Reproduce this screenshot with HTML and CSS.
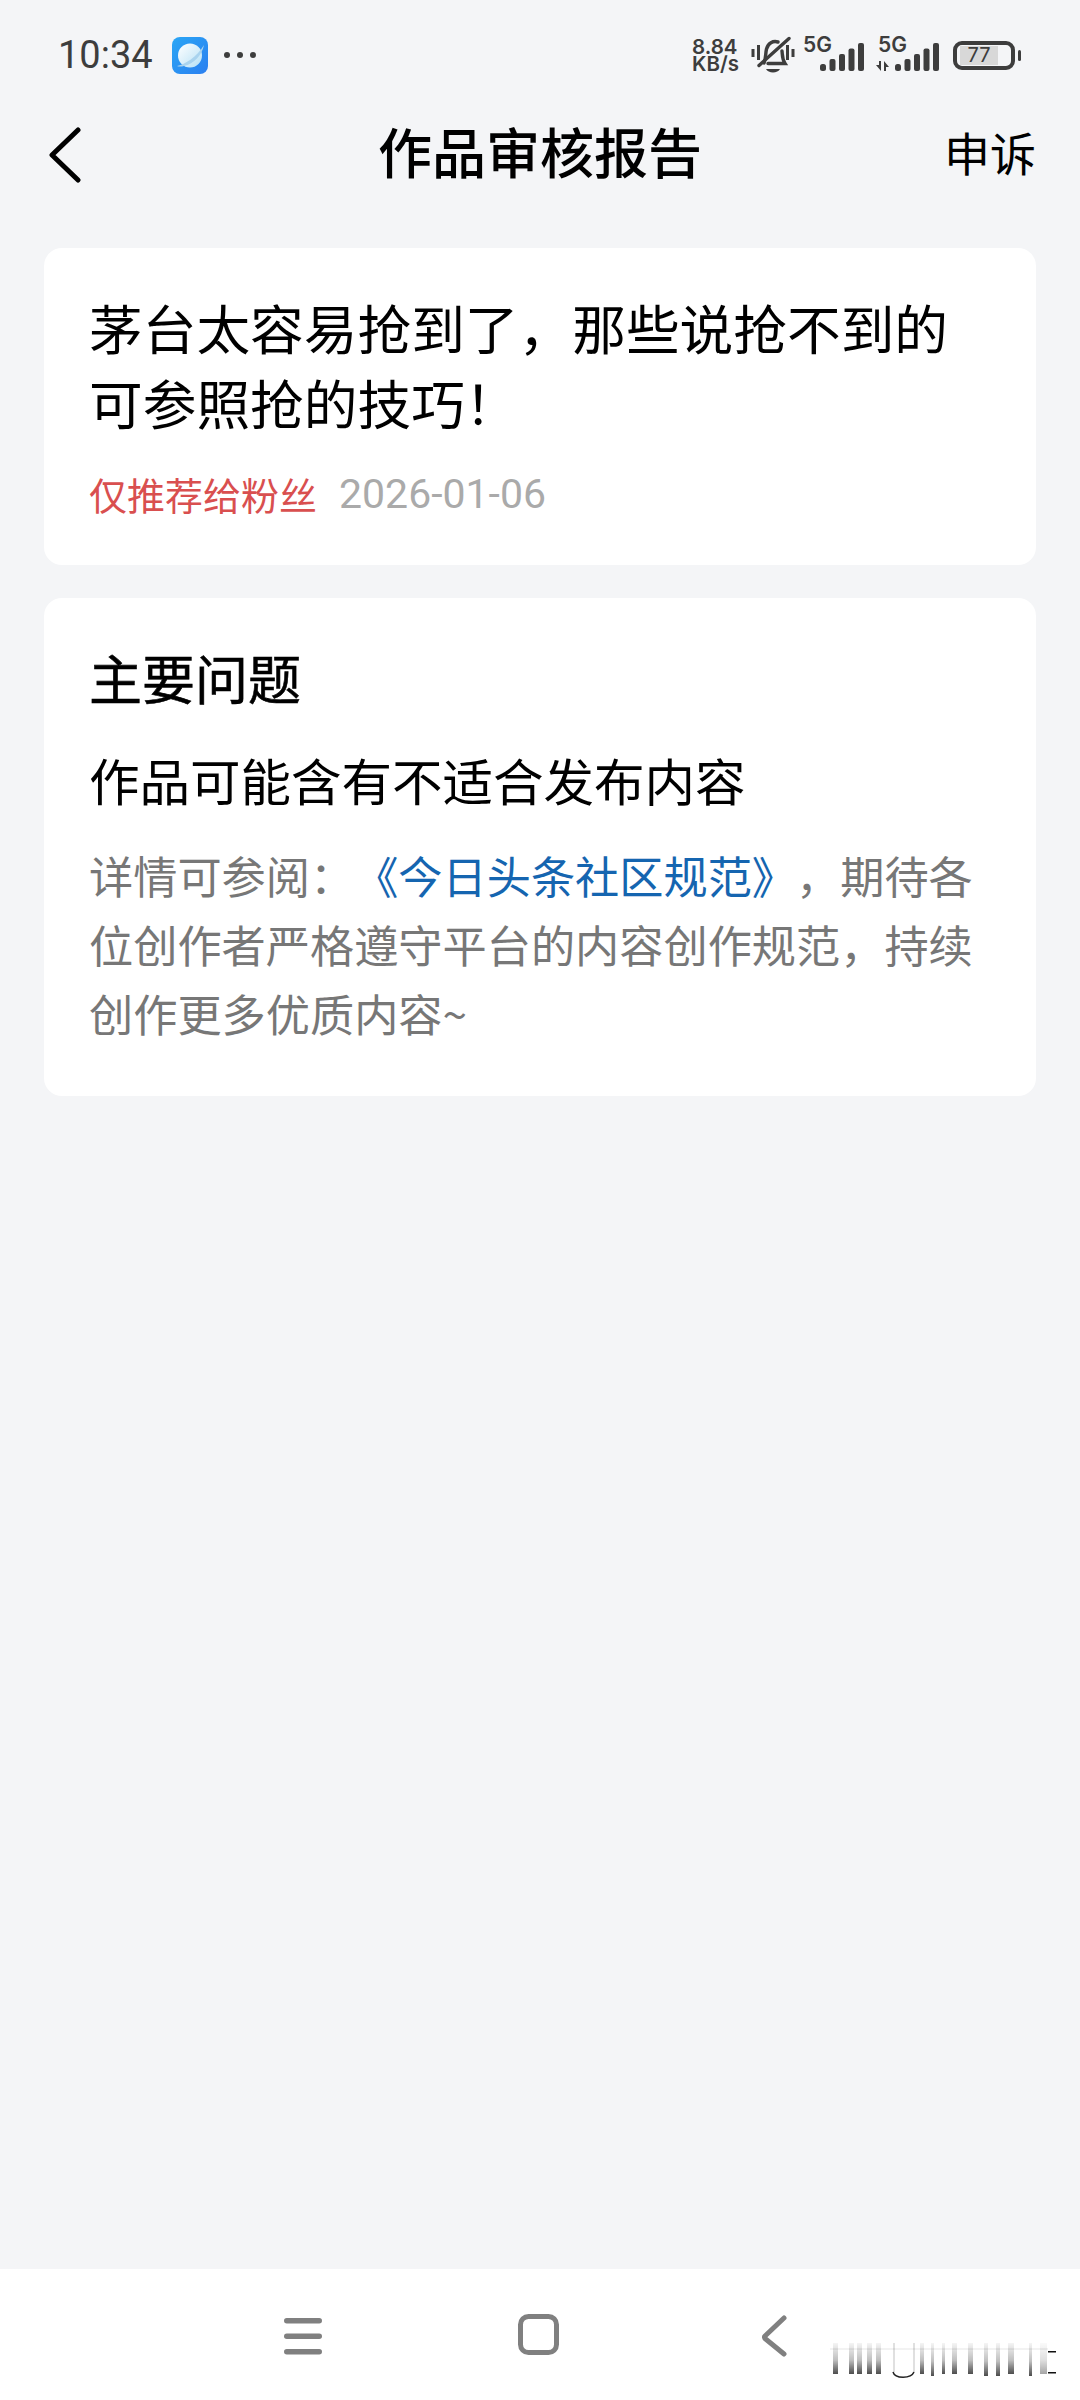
FILE: index.html
```html
<!DOCTYPE html>
<html>
<head>
  <meta charset="utf-8">
  <title>作品审核报告</title>
  <link rel="stylesheet" href="styles.css">
</head>
<body>
  <div class="page">
    <!-- 状态栏 -->
    <div class="status-bar">
      <div class="status-left">
        <span class="time">10:34</span>
        <svg class="app-icon" width="36" height="37" viewBox="0 0 36 37">
          <defs>
            <linearGradient id="appBg" x1="0" y1="0" x2="1" y2="1">
              <stop offset="0" stop-color="#2aa6f5"/>
              <stop offset="1" stop-color="#2b7ff0"/>
            </linearGradient>
            <linearGradient id="planet" x1="0" y1="0" x2="1" y2="1">
              <stop offset="0" stop-color="#ffffff"/>
              <stop offset="1" stop-color="#b5e0f5"/>
            </linearGradient>
          </defs>
          <rect width="36" height="37" rx="8" fill="url(#appBg)"/>
          <circle cx="18" cy="18.5" r="12" fill="url(#planet)"/>
          <path d="M5 29 C12 28 25 20 32 8 C30 18 22 27 12 29 C9 29.8 6.500 29.600 5 29 Z" fill="#a9d3ee"/>
        </svg>
        <span class="dots"><i></i><i></i><i></i></span>
      </div>
      <div class="status-right">
        <div class="speed">
          <div>8.84</div>
          <div>KB/s</div>
        </div>
        <svg class="bell" width="46" height="38" viewBox="0 0 44 38" fill="none" stroke="#3d3d3d">
          <path d="M2 13 V21 M7.500 9 V24 M36.500 9 V24 M42 13 V21" stroke-width="3"/>
          <path d="M13 27 C15 22 14.500 17 15.500 13 C17 7 22 4.500 27 6 M31 15 C31.500 19 31 23 34 27.500 H17" stroke-width="3.400" stroke-linecap="round"/>
          <path d="M8 29.500 L38 2.500" stroke-width="3.400" stroke-linecap="round"/>
          <path d="M15 33 H29 C27 37.500 17 37.500 15 33 Z" fill="#3d3d3d" stroke="none"/>
        </svg>
        <div class="net">
          <span class="net-label">5G</span>
          <svg class="bars" width="44" height="28" viewBox="0 0 44 28" fill="#3d3d3d">
            <rect x="0" y="21" width="6" height="7" rx="2.500"/>
            <rect x="9.500" y="16" width="6" height="12" rx="2"/>
            <rect x="19" y="11" width="6" height="17" rx="2"/>
            <rect x="28.500" y="5.500" width="6" height="22.500" rx="2"/>
            <rect x="38" y="0" width="6" height="28" rx="2"/>
          </svg>
        </div>
        <div class="net">
          <span class="net-label">5G</span>
          <svg class="arrows" width="14" height="10" viewBox="0 0 14 10" fill="#3d3d3d">
            <path d="M0 4 H3 V0 H5 V10 L0 4 Z M8 0 L13 6 H10 V10 H8 Z"/>
          </svg>
          <svg class="bars" width="44" height="28" viewBox="0 0 44 28" fill="#3d3d3d">
            <rect x="0" y="21" width="6" height="7" rx="2.500"/>
            <rect x="9.500" y="16" width="6" height="12" rx="2"/>
            <rect x="19" y="11" width="6" height="17" rx="2"/>
            <rect x="28.500" y="5.500" width="6" height="22.500" rx="2"/>
            <rect x="38" y="0" width="6" height="28" rx="2"/>
          </svg>
        </div>
        <div class="battery">
          <div class="battery-body"><span class="battery-fill">77</span></div>
          <div class="battery-cap"></div>
        </div>
      </div>
    </div>

    <!-- 标题栏 -->
    <div class="nav-bar">
      <div class="nav-left">
        <svg width="32" height="56" viewBox="0 0 32 56" fill="none" stroke="#000" stroke-width="5" stroke-linecap="round" stroke-linejoin="round">
          <path d="M29 3 L3 28 L29 53"/>
        </svg>
      </div>
      <h1 class="nav-title">作品审核报告</h1>
      <div class="nav-right">申诉</div>
    </div>

    <div class="content">
      <div class="card card-work">
        <div class="work-title">茅台太容易抢到了，那些说抢不到的可参照抢的技巧！</div>
        <div class="work-meta">
          <span class="work-tag">仅推荐给粉丝</span>
          <span class="work-date">2026-01-06</span>
        </div>
      </div>

      <div class="card card-issue">
        <h2 class="issue-head">主要问题</h2>
        <div class="issue-name">作品可能含有不适合发布内容</div>
        <p class="issue-desc">详情可参阅：<a class="issue-link">《今日头条社区规范》</a>，期待各位创作者严格遵守平台的内容创作规范，持续创作更多优质内容~</p>
      </div>
    </div>

    <!-- 底部导航 -->
    <div class="bottom-nav">
      <svg class="nav-icon icon-menu" width="38" height="37" viewBox="0 0 38 37" fill="#808080">
        <rect x="0" y="0" width="38" height="5.500" rx="2.750"/>
        <rect x="0" y="15.500" width="38" height="5.500" rx="2.750"/>
        <rect x="0" y="31" width="38" height="5.500" rx="2.750"/>
      </svg>
      <svg class="nav-icon icon-home" width="41" height="41" viewBox="0 0 41 41" fill="none" stroke="#808080" stroke-width="5">
        <rect x="2.500" y="2.500" width="36" height="36" rx="8"/>
      </svg>
      <svg class="nav-icon icon-back" width="26" height="42" viewBox="0 0 26 42" fill="none" stroke="#808080" stroke-width="5" stroke-linecap="round" stroke-linejoin="round">
        <path d="M23 3 L4 21 Q3 22 4 23.500 L23 39"/>
      </svg>
      <!-- 截图底部残留的条纹 -->
      <svg class="stripes" width="240" height="40" viewBox="0 0 240 40">
        <defs>
          <linearGradient id="stripe" x1="0" y1="0" x2="0" y2="1">
            <stop offset="0" stop-color="#000" stop-opacity="0.04"/>
            <stop offset="0.55" stop-color="#000" stop-opacity="0.25"/>
            <stop offset="1" stop-color="#000" stop-opacity="0.7"/>
          </linearGradient>
        </defs>
        <g fill="url(#stripe)">
          <rect x="3" y="2" width="5" height="31"/>
          <rect x="19" y="2" width="5" height="31"/>
          <rect x="27" y="2" width="5" height="31"/>
          <rect x="37" y="2" width="5" height="31"/>
          <rect x="46" y="2" width="5" height="31"/>
          <rect x="90" y="2" width="4" height="31"/>
          <rect x="101" y="2" width="3" height="33"/>
          <rect x="112" y="2" width="3" height="31"/>
          <rect x="122" y="2" width="5" height="31"/>
          <rect x="138" y="2" width="5" height="31"/>
          <rect x="154" y="2" width="4" height="33"/>
          <rect x="166" y="2" width="4" height="33"/>
          <rect x="178" y="2" width="6" height="31"/>
          <rect x="199" y="2" width="3" height="33"/>
          <rect x="210" y="2" width="7" height="31" opacity="0.5"/>
        </g>
        <path d="M63 31 C65 38 81 38 84 31" fill="none" stroke="#222" stroke-width="1.500"/>
        <path d="M64 2 V31 M84 2 V31" stroke="#000" stroke-opacity="0.12" stroke-width="2"/>
        <rect x="0" y="7" width="218" height="2" fill="#000" opacity="0.05"/>
        <rect x="218" y="10" width="8" height="1.500" fill="#111"/>
        <rect x="218" y="31" width="8" height="1.500" fill="#111"/>
      </svg>
    </div>
  </div>
</body>
</html>
```

FILE: styles.css
```css
* {
  box-sizing: border-box;
}
body {
  margin: 0;
  background-color: #f4f5f7;
  font-family: "Noto Sans CJK SC", "Noto Sans", sans-serif;
  text-spacing-trim: space-all;
}
.page {
  width: 1080px;
  height: 2400px;
  display: flex;
  flex-direction: column;
}

/* 状态栏 */
.status-bar {
  height: 110px;
  padding: 0 59px 0 58px;
  display: flex;
  justify-content: space-between;
  align-items: center;
  color: #3d3d3d;
}
.status-left {
  display: flex;
  align-items: center;
}
.time {
  font-family: Roboto, sans-serif;
  font-size: 38px;
  margin-right: 19px;
}
.dots {
  display: flex;
  gap: 7px;
  margin-left: 16px;
}
.dots i {
  width: 6px;
  height: 6px;
  border-radius: 50%;
  background-color: #3d3d3d;
}
.status-right {
  display: flex;
  align-items: center;
  font-family: Inter, Roboto, sans-serif;
}
.speed {
  width: 50px;
  font-size: 20.500px;
  font-weight: 600;
  line-height: 17.500px;
  margin-right: 8px;
  white-space: nowrap;
}
.bell {
  margin-right: 7px;
}
.net {
  display: flex;
  align-items: flex-end;
  position: relative;
  width: 61px;
  height: 32px;
  justify-content: flex-end;
  margin-right: 14px;
}
.net-label {
  position: absolute;
  left: 0;
  top: -5px;
  font-size: 21px;
  font-weight: 600;
  line-height: 22px;
}
.arrows {
  position: absolute;
  left: -2px;
  bottom: 0;
}
.battery {
  display: flex;
  align-items: center;
  gap: 3px;
}
.battery-body {
  width: 62px;
  height: 29px;
  border: 4px solid #3d3d3d;
  border-radius: 9px;
  padding: 1px 0 1px 3px;
}
.battery-fill {
  display: block;
  width: 38px;
  height: 19px;
  background-color: #d8d8d8;
  font-size: 20px;
  line-height: 19px;
  text-align: center;
}
.battery-cap {
  width: 3px;
  height: 11px;
  background-color: #3d3d3d;
  border-radius: 2px;
}

/* 标题栏 */
.nav-bar {
  height: 90px;
  padding: 0 44px;
  display: grid;
  grid-template-columns: 1fr auto 1fr;
  align-items: center;
}
.nav-left {
  display: flex;
  align-items: center;
  padding-left: 5px;
}
.nav-title {
  margin: 0 0 8px;
  font-size: 54px;
  font-weight: 500;
  line-height: 82px;
  color: #000;
}
.nav-right {
  margin-bottom: 8px;
  font-size: 46px;
  line-height: 82px;
  text-align: right;
  color: #000;
}

/* 内容 */
.content {
  flex: 1;
  padding: 48px 44px 0;
  display: flex;
  flex-direction: column;
  gap: 33px;
}
.card {
  background-color: #fff;
  border-radius: 18px;
  padding: 41px 45px;
}
.card-work {
  height: 317px;
}
.card-issue {
  height: 498px;
}
.work-title {
  font-size: 53.700px;
  line-height: 75px;
  color: #000;
}
.work-meta {
  margin-top: 30px;
  font-size: 38px;
  line-height: 50px;
  display: flex;
  gap: 22px;
}
.work-tag {
  color: #d94f4f;
}
.work-date {
  font-family: Roboto, sans-serif;
  font-size: 41px;
  color: #aaaaaa;
}
.issue-head {
  margin: 0 0 -3px;
  font-size: 53px;
  font-weight: 400;
  -webkit-text-stroke: 0.6px #000;
  line-height: 77px;
  color: #000;
}
.issue-name {
  margin-top: 31px;
  font-size: 50.500px;
  line-height: 70px;
  color: #000;
}
.issue-desc {
  margin: 27px 0 0;
  font-size: 44.200px;
  line-height: 69px;
  color: #777;
}
.issue-link {
  color: #1565b0;
}

/* 底部导航 */
.bottom-nav {
  position: relative;
  height: 131px;
  background-color: #fff;
  padding-top: 45px;
  display: flex;
  align-items: flex-start;
}
.nav-icon {
  flex: none;
}
.icon-menu {
  margin: 4px 0 0 284px;
}
.icon-home {
  margin-left: 196px;
}
.icon-back {
  margin: 1px 0 0 202px;
}
.stripes {
  position: absolute;
  left: 830px;
  top: 72px;
}
```
